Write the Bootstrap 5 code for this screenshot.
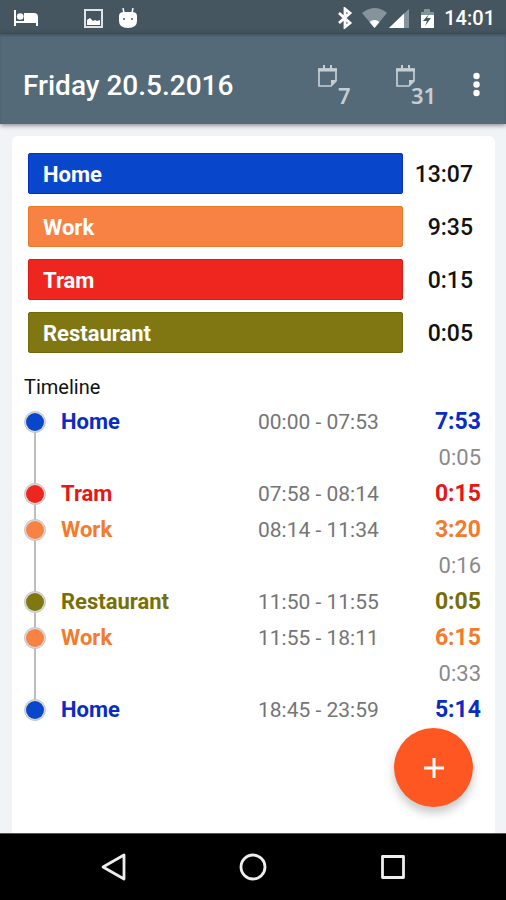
<!DOCTYPE html>
<html lang="en">
<head>
<meta charset="utf-8">
<meta name="viewport" content="width=device-width, initial-scale=1">
<title>Friday 20.5.2016</title>
<link href="https://cdn.jsdelivr.net/npm/bootstrap@5.3.0/dist/css/bootstrap.min.css" rel="stylesheet">
<style>
:root { --home: #0847cc; --work: #f78244; --tram: #ef2620; --rest: #807712; }
body { font-family: Roboto, "Liberation Sans", sans-serif; background: #f0f4f7; color: #111; font-size: 22px; line-height: 28px; }
.status-bar { background: #455660; height: 34px; padding: 2px 11px 0 14px; color: #fff; font-size: 20px; font-weight: 500; }
.notices { padding-left: 46px; }
.app-bar { background: #546a79; height: 90px; padding: 14px 9px 0 23px; color: #fff; box-shadow: 0 1px 5px rgba(0,0,0,.5), inset 0 2px 2px rgba(30,50,65,.3); z-index: 1; }
.app-bar h1 { font-size: 28px; line-height: 32px; font-weight: 500; }
.icon-btn { background: none; border: 0; padding: 0; color: inherit; line-height: 0; }
.range-btn { width: 78px; height: 42px; color: #c6ced3; }
.range-btn svg { flex: none; }
.range-num { font: 600 22px/24px "Noto Sans", Roboto, sans-serif; }
.range-wide { margin-left: -5px; }
.more-btn { width: 24px; }
.sheet { background: #fff; border-radius: 6px 6px 0 0; margin: 12px 11px 0 12px; }
.totals { padding: 17px 22px 0 16px; gap: 12px; }
.total-bar { height: 41px; padding: 2px 14px 0; border-radius: 2px; color: #fff; font-weight: 700; border: 1px solid; }
.total-time { width: 70px; font-size: 23px; font-weight: 500; padding-top: 3px; }
.bar-home { background: var(--home); border-color: #0930c4; }
.bar-work { background: var(--work); border-color: #e87a28; }
.bar-tram { background: var(--tram); border-color: #e01818; }
.bar-rest { background: var(--rest); border-color: #716a08; }
.timeline { padding: 20px 14px 0 12px; }
.timeline h2 { font-size: 20px; line-height: 28px; font-weight: 400; margin: 0; padding-bottom: 3px; }
.timeline td { height: 36px; padding: 0; vertical-align: middle; }
.rail { width: 22px; background: linear-gradient(#bdbdbd, #bdbdbd) center / 2px 100% no-repeat; }
.rail-start { background-position: bottom; background-size: 2px 50%; }
.rail-end { background-position: top; background-size: 2px 50%; }
.stop { width: 22px; height: 22px; border-radius: 50%; border: 1px solid #c4c4c4; background: #dcdcdc; }
.stop::before { content: ""; display: block; width: 18px; height: 18px; margin: 1px; border-radius: 50%; background: currentColor; }
.place { padding-left: 15px !important; font-weight: 700; }
.span-col { width: 134px; color: #757575; font-size: 21px; }
.length-col { width: 89px; text-align: right; color: #8a8a8a; }
.length-strong { font-weight: 700; font-size: 23px; }
.c-home { color: var(--home); } .t-home { color: #0a2bc4; }
.c-work { color: var(--work); } .t-work { color: #f47a2c; }
.c-tram { color: var(--tram); } .t-tram { color: #e61717; }
.c-rest { color: var(--rest); } .t-rest { color: #777008; }
.add-btn { right: 33px; bottom: 26px; width: 79px; height: 79px; background: #ff5722; color: #fff; box-shadow: 0 6px 10px rgba(0,0,0,.22); }
.nav-bar { background: #000; height: 67px; gap: 92px; color: #eee; border-top: 1px solid #555; }
.nav-bar .icon-btn { width: 48px; height: 48px; }
</style>
<script src="https://cdn.jsdelivr.net/npm/bootstrap@5.3.0/dist/js/bootstrap.bundle.min.js" defer></script>
</head>
<body class="d-flex flex-column min-vh-100">
<div class="status-bar d-flex align-items-center">
  <svg width="24" height="18" viewBox="0 0 24 18" fill="#fff"><path d="M0 1h2v11h8V4h10q4 0 4 4v9h-2v-3H2v3H0z"/><circle cx="6.200" cy="7.500" r="3.300"/></svg>
  <div class="notices d-flex align-items-center gap-3 me-auto">
    <svg width="19" height="19" viewBox="0 0 19 19"><rect x="1" y="1" width="17" height="17" fill="none" stroke="#dfe4e7" stroke-width="2"/><path d="M3 11l3-2 3 3 2-1 2 1 3-1v5H3z" fill="#fff"/></svg>
    <svg width="18" height="20" viewBox="0 0 18 20" fill="#fff"><path d="M4 0l1 5M14 0l-1 5" stroke="#fff" stroke-width="1.500"/><path d="M0 8q0-4 5-4h8q5 0 5 4v5q0 7-9 7t-9-7z"/><circle cx="5" cy="11" r="1" fill="#455660"/><circle cx="13" cy="11" r="1" fill="#455660"/></svg>
  </div>
  <svg width="106" height="22" viewBox="0 0 106 22"><path d="M1 6l11 10-5 4V2l5 4L1 16" fill="none" stroke="#fff" stroke-width="2.800"/><path d="M24 6q13-10 25 0L36.500 21z" fill="#85939b"/><path d="M31.500 15q5-4 10 0l-5 6z" fill="#fff"/><path d="M71 2v19H51z" fill="#85939b"/><path d="M66 6.500V21H51z" fill="#fff"/><path d="M83 5h3V2h6v3h4v4H83z" fill="#85939b"/><path d="M83 8h13v13H83z" fill="#fff"/><path d="M91 7l-6 7h4l-2 5 6-8h-4z" fill="#455660"/></svg>
  <span>14:01</span>
</div>
<header class="app-bar d-flex align-items-center position-relative">
  <h1 class="m-0 me-auto">Friday 20.5.2016</h1>
  <button class="icon-btn range-btn d-flex" type="button" aria-label="Week, 7 days">
    <svg width="21" height="24" viewBox="0 0 21 24"><path d="M2 4h17v12l-5 5H2z" fill="none" stroke="currentColor" stroke-width="1.700"/><path d="M1 5h19" stroke="currentColor" stroke-width="3"/><path d="M7 0v4M14 0v4" stroke="currentColor" stroke-width="2"/><path d="M19 15h-5v6z" fill="currentColor"/></svg>
    <span class="range-num align-self-end">7</span>
  </button>
  <button class="icon-btn range-btn d-flex" type="button" aria-label="Month, 31 days">
    <svg width="21" height="24" viewBox="0 0 21 24"><path d="M2 4h17v12l-5 5H2z" fill="none" stroke="currentColor" stroke-width="1.700"/><path d="M1 5h19" stroke="currentColor" stroke-width="3"/><path d="M7 0v4M14 0v4" stroke="currentColor" stroke-width="2"/><path d="M19 15h-5v6z" fill="currentColor"/></svg>
    <span class="range-num range-wide align-self-end">31</span>
  </button>
  <button class="icon-btn more-btn" type="button" aria-label="More options">
    <svg width="24" height="40" viewBox="0 0 24 40" fill="#fff"><circle cx="3.500" cy="10" r="3.200"/><circle cx="3.500" cy="18.500" r="3.200"/><circle cx="3.500" cy="27" r="3.200"/></svg>
  </button>
</header>
<main class="flex-grow-1 d-flex flex-column position-relative">
  <div class="sheet flex-grow-1">
    <section class="totals d-flex flex-column">
      <div class="d-flex align-items-center"><div class="total-bar bar-home flex-grow-1 d-flex align-items-center">Home</div><div class="total-time text-end">13:07</div></div>
      <div class="d-flex align-items-center"><div class="total-bar bar-work flex-grow-1 d-flex align-items-center">Work</div><div class="total-time text-end">9:35</div></div>
      <div class="d-flex align-items-center"><div class="total-bar bar-tram flex-grow-1 d-flex align-items-center">Tram</div><div class="total-time text-end">0:15</div></div>
      <div class="d-flex align-items-center"><div class="total-bar bar-rest flex-grow-1 d-flex align-items-center">Restaurant</div><div class="total-time text-end">0:05</div></div>
    </section>
    <section class="timeline">
      <h2 id="timeline-title">Timeline</h2>
      <table class="w-100" aria-labelledby="timeline-title">
        <tbody>
          <tr><td class="rail rail-start"><div class="stop c-home"></div></td><td class="place t-home">Home</td><td class="span-col">00:00 - 07:53</td><td class="length-col length-strong t-home">7:53</td></tr>
          <tr><td class="rail"></td><td></td><td></td><td class="length-col">0:05</td></tr>
          <tr><td class="rail"><div class="stop c-tram"></div></td><td class="place t-tram">Tram</td><td class="span-col">07:58 - 08:14</td><td class="length-col length-strong t-tram">0:15</td></tr>
          <tr><td class="rail"><div class="stop c-work"></div></td><td class="place t-work">Work</td><td class="span-col">08:14 - 11:34</td><td class="length-col length-strong t-work">3:20</td></tr>
          <tr><td class="rail"></td><td></td><td></td><td class="length-col">0:16</td></tr>
          <tr><td class="rail"><div class="stop c-rest"></div></td><td class="place t-rest">Restaurant</td><td class="span-col">11:50 - 11:55</td><td class="length-col length-strong t-rest">0:05</td></tr>
          <tr><td class="rail"><div class="stop c-work"></div></td><td class="place t-work">Work</td><td class="span-col">11:55 - 18:11</td><td class="length-col length-strong t-work">6:15</td></tr>
          <tr><td class="rail"></td><td></td><td></td><td class="length-col">0:33</td></tr>
          <tr><td class="rail rail-end"><div class="stop c-home"></div></td><td class="place t-home">Home</td><td class="span-col">18:45 - 23:59</td><td class="length-col length-strong t-home">5:14</td></tr>
        </tbody>
      </table>
    </section>
  </div>
  <button class="add-btn position-absolute rounded-circle border-0 d-flex align-items-center justify-content-center" type="button" aria-label="Add">
    <svg width="22" height="22" viewBox="0 0 22 22"><path d="M11 1v20M1 11h20" stroke="#fff" stroke-width="3"/></svg>
  </button>
</main>
<nav class="nav-bar d-flex align-items-center justify-content-center" aria-label="System">
  <button class="icon-btn" type="button" aria-label="Back"><svg width="28" height="28" viewBox="0 0 28 28"><path d="M25 2v24L4 14z" fill="none" stroke="currentColor" stroke-width="2.800" stroke-linejoin="round"/></svg></button>
  <button class="icon-btn" type="button" aria-label="Home"><svg width="28" height="28" viewBox="0 0 28 28"><circle cx="14" cy="14" r="12" fill="none" stroke="currentColor" stroke-width="2.800"/></svg></button>
  <button class="icon-btn" type="button" aria-label="Recent apps"><svg width="28" height="28" viewBox="0 0 28 28"><rect x="3.500" y="3.500" width="21" height="21" fill="none" stroke="currentColor" stroke-width="2.800" stroke-linejoin="round"/></svg></button>
</nav>
</body>
</html>
